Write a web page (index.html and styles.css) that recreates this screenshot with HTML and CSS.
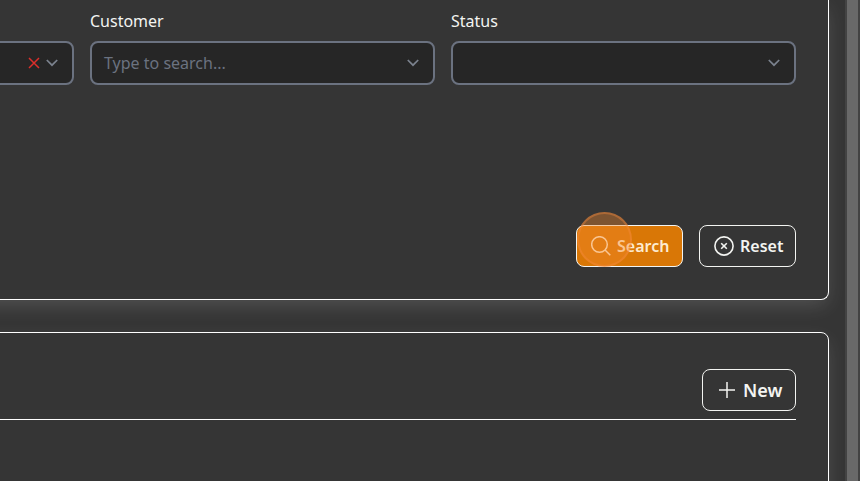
FILE: index.html
```html
<!DOCTYPE html>
<html lang="en">
<head>
<meta charset="utf-8">
<title>Search</title>
<link rel="stylesheet" href="styles.css">
</head>
<body>
<div class="app">
  <main class="content">
    <section class="card filters">
      <div class="fields">
        <div class="field">
          <span class="label">&nbsp;</span>
          <div class="select">
            <span class="placeholder"></span>
            <svg class="clear" width="12" height="12" viewBox="0 0 12 12"><path d="M1 1l10 10M11 1L1 11"/></svg>
            <svg class="chevron" width="12" height="8" viewBox="0 0 12 8"><path d="M.8 1l5.200 5.200L11.200 1"/></svg>
          </div>
        </div>
        <div class="field">
          <span class="label">Customer</span>
          <div class="select">
            <span class="placeholder">Type to search...</span>
            <svg class="chevron" width="12" height="8" viewBox="0 0 12 8"><path d="M.8 1l5.200 5.200L11.200 1"/></svg>
          </div>
        </div>
        <div class="field">
          <span class="label">Status</span>
          <div class="select">
            <span class="placeholder"></span>
            <svg class="chevron" width="12" height="8" viewBox="0 0 12 8"><path d="M.8 1l5.200 5.200L11.200 1"/></svg>
          </div>
        </div>
      </div>
      <div class="actions">
        <button class="btn primary">
          <svg width="20" height="20" viewBox="0 0 20 20"><circle cx="8.500" cy="8.500" r="7.800"/><path d="M14 14l5.300 5.300"/></svg>
          <span>Search</span>
          <i class="pointer"></i>
        </button>
        <button class="btn reset">
          <svg width="20" height="20" viewBox="0 0 20 20"><circle cx="10" cy="10" r="9.100"/><path d="M7.200 7.200l5.600 5.600M12.800 7.200l-5.600 5.600"/></svg>
          <span>Reset</span>
        </button>
      </div>
    </section>
    <section class="card results">
      <div class="toolbar">
        <button class="btn new">
          <svg width="16" height="16" viewBox="0 0 16 16"><path d="M8 0v16M0 8h16"/></svg>
          <span>New</span>
        </button>
      </div>
    </section>
  </main>
  <div class="scrollbar"><div class="thumb"></div></div>
</div>
</body>
</html>
```

FILE: styles.css
```css
* { box-sizing: border-box; }
body {
  margin: 0;
  height: 481px;
  overflow: hidden;
  background: #353535;
  color: #f3f4f1;
  font: 16px/24px "Noto Sans", sans-serif;
}
.app { display: flex; height: 481px; }
.content {
  width: 845px;
  flex: none;
  padding-right: 16px;
  overflow: hidden;
  display: flex;
  flex-direction: column;
  gap: 32px;
}
.card {
  border: 1px solid #fff;
  margin-left: -60px;
  padding: 0 32px;
  border-radius: 8px;
  background: #353535;
  flex: none;
  box-shadow: 0 7px 20px -2px rgba(255, 255, 255, .15);
}
.filters {
  height: 300px;
  border-top: 0;
  border-top-right-radius: 0;
  padding-top: 9px;
  padding-bottom: 32px;
  display: flex;
  flex-direction: column;
  justify-content: space-between;
}
.fields { display: flex; justify-content: flex-end; gap: 16px; }
.field { width: 345px; flex: none; }
.label { display: block; height: 24px; margin-bottom: 8px; }
.select {
  height: 44px;
  border: 2px solid #6b7280;
  border-radius: 8px;
  background: #262626;
  padding: 0 14px 0 12px;
  display: flex;
  align-items: center;
}
.placeholder { flex: 1; color: #6b7280; }
svg { display: block; flex: none; fill: none; stroke: currentColor; }
.chevron { color: #7b828e; stroke-width: 1.7; }
.clear { color: #dc2f2b; stroke-width: 1.500; margin-right: 6px; }
.actions { display: flex; justify-content: flex-end; gap: 16px; }
.btn {
  position: relative;
  height: 42px;
  border: 1px solid #f3f4f1;
  border-radius: 8px;
  padding: 0;
  background: transparent;
  color: #f3f4f1;
  font: 600 16px/24px "Noto Sans", sans-serif;
  display: flex;
  align-items: center;
}
.primary { width: 107px; padding-left: 14px; gap: 6px; background: #d97706; color: #fdebd0; }
.primary svg { stroke-width: 1.500; }
.reset { width: 97px; padding-left: 14px; gap: 6px; }
.reset svg { stroke-width: 1.600; }
.pointer {
  position: absolute;
  left: 0;
  top: -14px;
  width: 55px;
  height: 55px;
  border-radius: 50%;
  border: 2px solid rgba(244, 137, 62, .4);
  background: rgba(244, 137, 45, .38);
}
.results { position: relative; height: 170px; border-bottom-right-radius: 0; padding-top: 36px; }
.toolbar { display: flex; justify-content: flex-end; height: 51px; border-bottom: 1px solid #fff; }
.new { width: 94px; padding-left: 16px; gap: 8px; font-size: 18px; }
.new svg { stroke-width: 1.500; }
.scrollbar { width: 15px; background: #434343; padding: 0 2px; border-right: 0; }
.thumb { width: 11px; height: 481px; background: #696969; }
```
